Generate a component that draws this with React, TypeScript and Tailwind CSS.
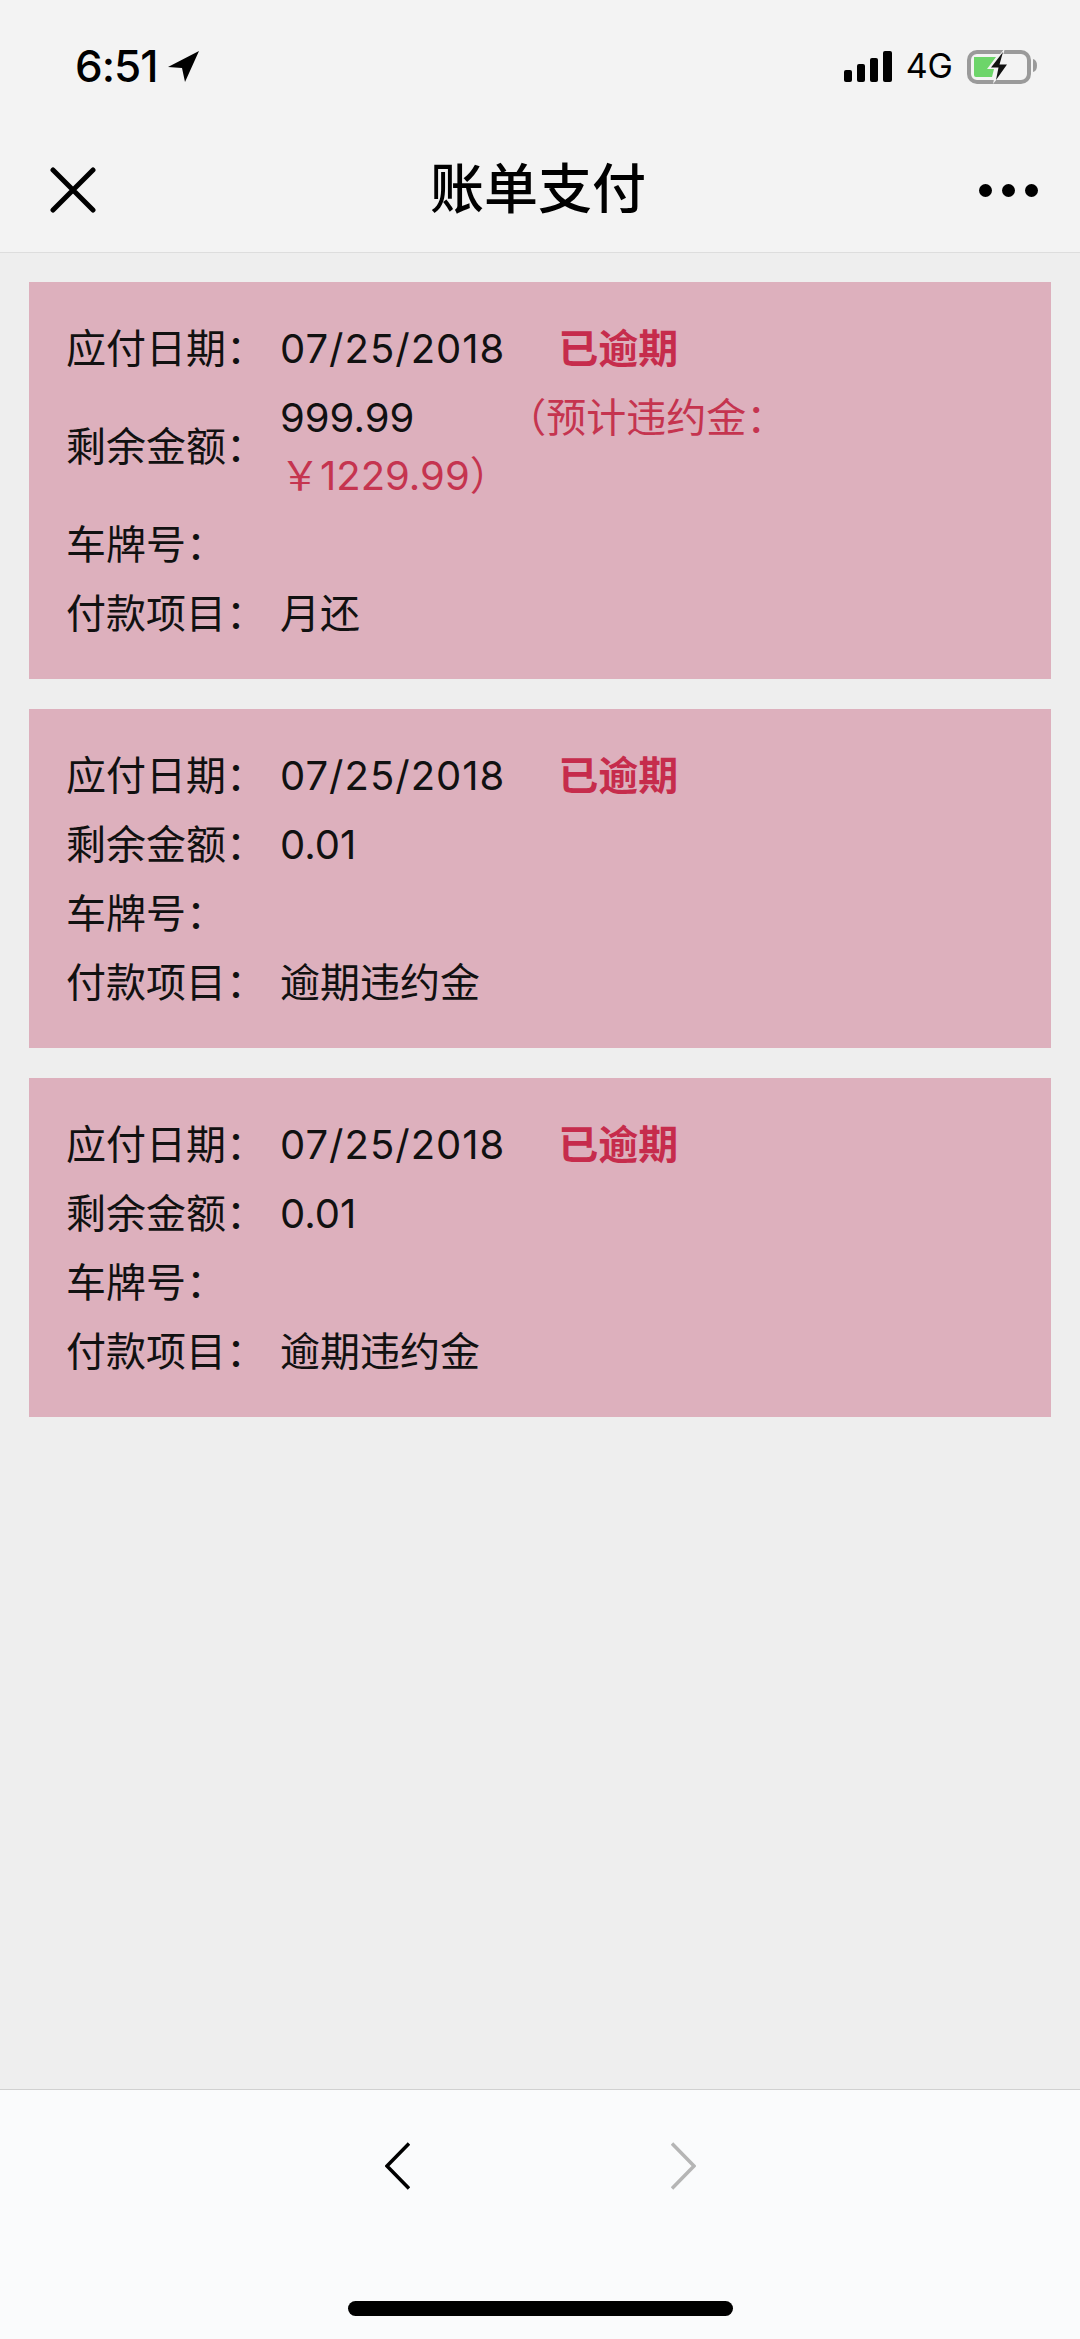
const sans = "font-['Inter','Noto_Sans_CJK_SC',sans-serif]";

function Row({ label, children }: { label: string; children?: React.ReactNode }) {
  return (
    <div className="flex items-center py-[5.5px] text-[40px] leading-[58px] text-[#111]">
      <div className="w-[214px] shrink-0">{label}</div>
      <div className="w-[520px]">{children}</div>
    </div>
  );
}

function Overdue() {
  return <span className="ml-[53px] font-bold text-[#c62c4c]">已逾期</span>;
}

function Card({ amount, plate, item, fee }: { amount: string; plate?: string; item: string; fee?: boolean }) {
  return (
    <section className="bg-[#ddb0bd] pl-[37px] pt-[32px] pb-[31px]">
      <Row label="应付日期：">
        <span className="tracking-[1px]">07/25/2018</span>
        <Overdue />
      </Row>
      <Row label="剩余金额：">
        {amount}
        {fee && (
          <>
            <span className="ml-[92px] text-[#c5344f]">（预计违约金：</span>
            <span className="text-[#c5344f]">￥1229.99）</span>
          </>
        )}
      </Row>
      <Row label="车牌号：">{plate}</Row>
      <Row label="付款项目：">{item}</Row>
    </section>
  );
}

export default function App() {
  return (
    <div className={`${sans} flex h-[2339px] w-[1080px] flex-col bg-[#eeeeee] text-black`}>
      <header className="h-[253px] shrink-0 border-b border-[#dddddd] bg-[#f3f3f3]">
        <div className="flex h-[120px] items-center justify-between pt-[12px] pl-[75px] pr-[42px]">
          <div className="flex items-center gap-[10px]">
            <span className="text-[44px] leading-none font-medium tracking-[-1px]">6:51</span>
            <svg width="32" height="32" viewBox="0 0 32 32">
              <path d="M31 1 L0 17 L14 18 L17 32 Z" fill="#000" />
            </svg>
          </div>
          <div className="flex items-center">
            <div className="flex h-[31px] items-end gap-[5px]">
              <span className="h-[12px] w-[8px] rounded-[2px] bg-black" />
              <span className="h-[18px] w-[8px] rounded-[2px] bg-black" />
              <span className="h-[24px] w-[8px] rounded-[2px] bg-black" />
              <span className="h-[31px] w-[9px] rounded-[2px] bg-black" />
            </div>
            <span className="ml-[14px] text-[34px] leading-none">4G</span>
            <svg className="ml-[14px]" width="71" height="36" viewBox="0 0 71 36">
              <rect x="2" y="4" width="60" height="30" rx="8" fill="none" stroke="#9a9a9a" strokeWidth="4" />
              <path d="M7 9 H29 L20 21 H27 L25 29 H9 Q7 29 7 27 Z" fill="#6dd56a" />
              <path d="M38 0 L21 21 H29 L26 36 L43 15 H34 Z" fill="#f3f3f3" />
              <path d="M36 4 L24 19.5 H31.5 L29 32 L40 16.5 H32.5 Z" fill="#111" />
              <path d="M66 11 Q70 12 70 17.5 Q70 23 66 24 Z" fill="#9a9a9a" />
            </svg>
          </div>
        </div>
        <div className="flex h-[132px] items-center pt-[8px]">
          <div className="w-[198px] pl-[50px]">
            <svg width="46" height="46" viewBox="0 0 46 46" className="block">
              <path d="M3 3 L43 43 M43 3 L3 43" stroke="#000" strokeWidth="5" strokeLinecap="round" />
            </svg>
          </div>
          <h1 className="flex-1 text-center text-[54px] leading-none font-medium">账单支付</h1>
          <div className="flex w-[202px] justify-end gap-[10px] pr-[42px]">
            <span className="h-[13px] w-[13px] rounded-full bg-black" />
            <span className="h-[13px] w-[13px] rounded-full bg-black" />
            <span className="h-[13px] w-[13px] rounded-full bg-black" />
          </div>
        </div>
      </header>

      <main className="flex flex-1 flex-col gap-[30px] px-[29px] pt-[29px]">
        <Card amount="999.99" item="月还" fee />
        <Card amount="0.01" item="逾期违约金" />
        <Card amount="0.01" item="逾期违约金" />
      </main>

      <footer className="relative h-[250px] shrink-0 border-t border-[#d0d0d0] bg-[#fafbfc]">
        <div className="flex justify-center gap-[261px] pt-[52px]">
          <svg width="25" height="48" viewBox="0 0 25 48" className="block">
            <path d="M24 1.5 L2 24 L24 46.5" fill="none" stroke="#000" strokeWidth="3.5" />
          </svg>
          <svg width="25" height="48" viewBox="0 0 25 48" className="block">
            <path d="M1 1.5 L23 24 L1 46.5" fill="none" stroke="#b5b5b5" strokeWidth="3.5" />
          </svg>
        </div>
        <div className="absolute bottom-[23px] left-[348px] h-[15px] w-[385px] rounded-full bg-black" />
      </footer>
    </div>
  );
}
